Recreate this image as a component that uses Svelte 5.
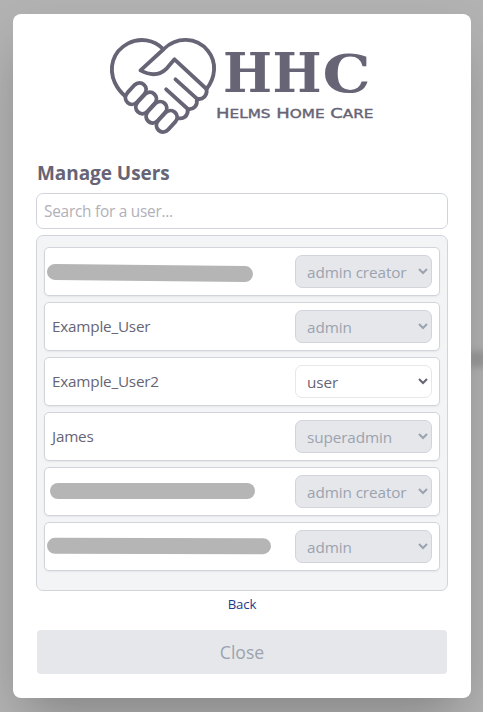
<script>
  const roles = ['user', 'admin', 'admin creator', 'superadmin'];
  const users = [
    { name: '', role: 'admin creator', locked: true, mask: { x: 2, w: 206, dy: 1, tilt: 0.6 } },
    { name: 'Example_User', role: 'admin', locked: true },
    { name: 'Example_User2', role: 'user', locked: false },
    { name: 'James', role: 'superadmin', locked: true },
    { name: '', role: 'admin creator', locked: true, mask: { x: 4.5, w: 205, dy: -1, tilt: 0 } },
    { name: '', role: 'admin', locked: true, mask: { x: 2, w: 224, dy: -1, tilt: 0.1 } }
  ];
</script>

<div class="backdrop">
  <div class="smudge"></div>
  <main class="modal">
    <svg class="logo" width="270" height="104" viewBox="106 34 270 104" role="img" aria-label="Helms Home Care">
      <g transform="translate(100.5 30) scale(.33333)" fill="none" stroke="#666475" stroke-width="11.5" stroke-linecap="round" stroke-linejoin="round">
        <path d="M188 57C160 29 118 22 83 40C35 65 24 115 43 158C51 175 61 188 76 200" />
        <path d="M222 88L318 177C344 145 351 97 322 62C287 20 228 20 190 57L120 121C153 139 180 134 199 115Z" />
        <path d="M318 177C321 197 307 211 289 206C292 227 280 240 262 237C263 258 249 269 231 264" />
        <path d="M225 148L289 206M197 178L262 237" />
        <g fill="#fff">
          <path d="M102 165L81 188C62 210 91 236 110 216L132 192C148 171 121 147 102 165Z" />
          <path d="M133 193L112 216C93 238 122 264 141 244L163 220C179 199 152 175 133 193Z" />
          <path d="M164 221L143 244C124 266 153 292 172 272L194 248C210 227 183 203 164 221Z" />
          <path d="M195 248L174 271C155 293 184 319 203 299L225 275C241 254 214 230 195 248Z" />
        </g>
      </g>
      <g fill="#666475">
        <g class="initials">
          <text transform="translate(223 92.2) scale(.98 1.01)">H</text>
          <text transform="translate(272.6 92.2) scale(.98 1.01)">H</text>
          <text transform="translate(322.5 92) scale(1.14 1)">C</text>
        </g>
        <text class="name" x="216" y="118" textLength="157.5" lengthAdjust="spacingAndGlyphs">H<tspan class="sm">ELMS</tspan> H<tspan class="sm">OME</tspan> C<tspan class="sm">ARE</tspan></text>
      </g>
    </svg>

    <h1>Manage Users</h1>
    <input type="text" placeholder="Search for a user..." />

    <div class="list">
      {#each users as u}
        <div class="card">
          {#if u.mask}
            <span class="mask" style="margin-left:{u.mask.x}px;width:{u.mask.w}px;transform:translateY({u.mask.dy}px) rotate({u.mask.tilt}deg)"></span>
          {:else}
            <span class="user">{u.name}</span>
          {/if}
          <select disabled={u.locked} value={u.role}>
            {#each roles as r}<option value={r}>{r}</option>{/each}
          </select>
        </div>
      {/each}
    </div>

    <a class="back" href="#back">Back</a>
    <button disabled>Close</button>
  </main>
</div>

<style>
  :global(body) { margin: 0; }
  .backdrop {
    position: relative;
    box-sizing: border-box;
    height: 712px;
    padding: 14px 12px 14px 13px;
    overflow: hidden;
    background: #b2b2b2;
    font-family: "Open Sans", "Noto Sans", sans-serif;
    color: #666475;
  }
  .smudge {
    position: absolute;
    right: -4px;
    top: 351px;
    width: 18px;
    height: 16px;
    background: #999;
    filter: blur(3px);
  }
  .modal {
    position: relative;
    box-sizing: border-box;
    display: flex;
    flex-direction: column;
    height: 684px;
    padding: 20px 23px 24px;
    background: #fff;
    border-radius: 8px;
    box-shadow: 0 25px 50px -12px rgba(0, 0, 0, .28);
  }
  .logo { display: block; flex: none; margin-left: 70px; }
  .initials { font: bold 53px "DejaVu Serif", serif; }
  .name { font: 14.6px "DejaVu Sans", sans-serif; stroke: #666475; stroke-width: .4px; }
  .sm { font-size: 12.4px; }
  h1 {
    margin: 21px 1px 6px;
    font-size: 19px;
    line-height: 28px;
    font-weight: 700;
    letter-spacing: -.06px;
  }
  input {
    box-sizing: border-box;
    flex: none;
    height: 36px;
    padding: 1px 7px 0;
    border: 1px solid #d1d5db;
    border-radius: 7px;
    font: 15.4px "Open Sans", sans-serif;
    letter-spacing: -.25px;
    outline: none;
  }
  input::placeholder { color: #b1b0b9; }
  .list {
    box-sizing: border-box;
    display: flex;
    flex-direction: column;
    gap: 6px;
    height: 356px;
    margin-top: 6px;
    padding: 11px 7px;
    background: #f3f4f6;
    border: 1px solid #d1d5db;
    border-radius: 7px;
  }
  .card {
    box-sizing: border-box;
    display: flex;
    align-items: center;
    justify-content: space-between;
    height: 49px;
    padding: 0 7px 0 0;
    background: #fff;
    border: 1px solid #d1d5db;
    border-radius: 5px;
    box-shadow: 0 1px 2px rgba(0, 0, 0, .06);
  }
  .user { padding: 0 0 2px 7px; font-size: 15.3px; letter-spacing: -.22px; }
  .mask { height: 16px; border-radius: 8px; background: #b5b5b5; }
  select {
    box-sizing: border-box;
    width: 137px;
    height: 33px;
    padding: 1px 0 0 7px;
    background-color: #fff;
    border: 1px solid #e5e7eb;
    border-radius: 7px;
    color: #666475;
    font: 15.3px "Open Sans", sans-serif;
    letter-spacing: -.1px;
  }
  select:disabled {
    opacity: 1;
    color: #9ca3af;
    background-color: #e5e7eb;
    border-color: #d1d5db;
  }
  .back {
    align-self: center;
    margin-top: 3px;
    color: #1e3a8a;
    font-size: 13.2px;
    line-height: 20px;
    letter-spacing: -.1px;
    text-decoration: none;
  }
  button {
    height: 44px;
    margin: 16px 1px 0;
    border: 0;
    border-radius: 4px;
    background: #e5e7eb;
    color: #9ca3af;
    font: 17.6px "Open Sans", sans-serif;
  }
</style>
